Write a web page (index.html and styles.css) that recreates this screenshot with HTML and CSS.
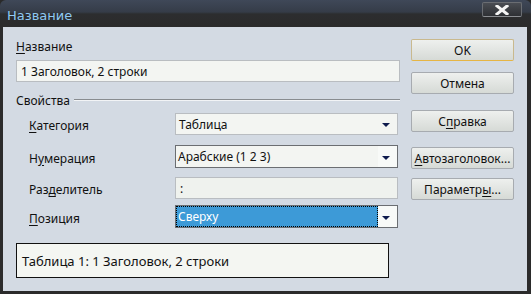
FILE: index.html
```html
<!DOCTYPE html>
<html lang="ru">
<head>
<meta charset="utf-8">
<link rel="stylesheet" href="styles.css">
</head>
<body>
<div class="window">
  <div class="titlebar">
    <span class="title">Название</span>
    <div class="close">
      <svg width="14" height="10" viewBox="0 0 14 10"><path d="M2 1 L12 9 M12 1 L2 9" stroke="#f4f4f4" stroke-width="3" stroke-linecap="square"/></svg>
    </div>
  </div>
  <div class="body">
    <div class="main">
      <div class="lbl"><u>Н</u>азвание</div>
      <div class="input name">1 Заголовок, 2 строки</div>
      <div class="legend"><span>Свойства</span><div class="rule"></div></div>
      <div class="props">
        <div class="prow r1">
          <div class="plabel"><u>К</u>атегория</div>
          <div class="combo"><span class="val">Таблица</span><span class="arrow"></span></div>
        </div>
        <div class="prow r2">
          <div class="plabel">Н<u>у</u>мерация</div>
          <div class="combo dark"><span class="val">Арабские (1 2 3)</span><span class="arrow"></span></div>
        </div>
        <div class="prow r3">
          <div class="plabel">Раз<u>д</u>елитель</div>
          <div class="input sep">:</div>
        </div>
        <div class="prow r4">
          <div class="plabel"><u>П</u>озиция</div>
          <div class="combo dark"><span class="val sel">Сверху</span><span class="arrow"></span></div>
        </div>
      </div>
      <div class="preview">Таблица 1: 1 Заголовок, 2 строки</div>
    </div>
    <div class="buttons">
      <div class="btn default b1">OK</div>
      <div class="btn b2">Отмена</div>
      <div class="btn b3">С<u>п</u>равка</div>
      <div class="btn b4"><u>А</u>втозаголовок...</div>
      <div class="btn b5">Параметр<u>ы</u>...</div>
    </div>
  </div>
</div>
</body>
</html>
```

FILE: styles.css
```css
html, body {
  margin: 0;
  padding: 0;
  background: #2a2a2a;
}
body {
  width: 531px;
  height: 294px;
  overflow: hidden;
  font-family: "Noto Sans", "Open Sans", sans-serif;
  font-size: 12px;
  color: #111;
}
u { text-decoration: underline; text-underline-offset: 2px; }
.window {
  width: 531px;
  height: 294px;
  box-sizing: border-box;
  background: #2b2b2b;
  border-radius: 6px 6px 0 0;
  display: flex;
  flex-direction: column;
  padding: 0 4px 3px 3px;
}
.titlebar {
  height: 27px;
  flex: none;
  display: flex;
  align-items: flex-start;
  justify-content: space-between;
  margin: 0 -4px 0 -3px;
  padding: 0 9px 0 7px;
  background: linear-gradient(#3f4858 0, #353c48 12px, #2c2d2f 14px, #2b2b2b 27px);
  border-radius: 6px 6px 0 0;
}
.title {
  color: #8ec8f2;
  font-family: "DejaVu Sans", sans-serif;
  font-size: 13px;
  line-height: 14px;
  margin-top: 9px;
}
.close {
  width: 40px;
  height: 15px;
  margin-top: 2px;
  box-sizing: border-box;
  border: 1px solid #6a6d72;
  border-bottom-color: #8b8e92;
  background: linear-gradient(#4a4d53, #2e3034);
  border-radius: 2px;
  display: flex;
  align-items: center;
  justify-content: center;
}
.body {
  flex: 1;
  background: #d3dae3;
  display: flex;
  padding-left: 13px;
}
.main {
  width: 384px;
  display: flex;
  flex-direction: column;
}
.lbl {
  margin-top: 12px;
  height: 16px;
  line-height: 16px;
}
.input {
  box-sizing: border-box;
  border: 1px solid #b9bdc1;
  background: #f3f5f2;
  padding-left: 4px;
  display: flex;
  align-items: center;
}
.name {
  margin-top: 5px;
  height: 22px;
}
.legend {
  margin-top: 10px;
  display: flex;
  align-items: center;
  height: 16px;
}
.rule {
  flex: 1;
  margin-left: 4px;
  height: 1px;
  background: #888c90;
  border-bottom: 1px solid #f2f4f6;
  margin-top: -1px;
}
.props {
  margin-top: 5px;
  display: flex;
  flex-direction: column;
}
.prow {
  display: flex;
  align-items: center;
}
.prow > :last-child {
  width: 223px;
  height: 100%;
}
.r1 { height: 22px; }
.r2 { height: 23px; margin-top: 10px; }
.r3 { height: 22px; margin-top: 9px; }
.r4 { height: 23px; margin-top: 6px; }
.plabel {
  width: 146px;
  padding-left: 13px;
  padding-top: 3px;
}
.combo {
  box-sizing: border-box;
  border: 1px solid #b9bdc1;
  background: #f3f5f2;
  display: flex;
  align-items: center;
  position: relative;
}
.combo.dark {
  border-color: #6b6e72;
  background: #f8faf8;
}
.combo .val {
  flex: 1;
  padding-left: 3px;
}
.combo.dark .val {
  background: #f3f5f2;
  height: 100%;
  display: flex;
  align-items: center;
  margin-right: 19px;
  padding-left: 2px;
}
.combo .val.sel {
  background: #3d9ad7;
  color: #fff;
  outline: 1px dotted #000;
  outline-offset: -1px;
}
.arrow {
  position: absolute;
  right: 7px;
  top: 50%;
  margin-top: -1px;
  width: 0;
  height: 0;
  border-left: 4px solid transparent;
  border-right: 4px solid transparent;
  border-top: 4px solid #0e1b4d;
}
.sep {
  background: #eff2ee;
  padding-left: 4px;
}
.preview {
  margin-top: 15px;
  width: 373px;
  height: 35px;
  box-sizing: border-box;
  border: 1px solid #111;
  background: #f4f6f2;
  font-size: 13px;
  display: flex;
  align-items: center;
  padding-left: 5px;
}
.buttons {
  margin-left: 11px;
  width: 103px;
  display: flex;
  flex-direction: column;
}
.btn {
  height: 22px;
  box-sizing: border-box;
  border: 1px solid #a7abb0;
  border-radius: 2px;
  background: linear-gradient(#eef0ee, #e2e5e2 50%, #d6dad6);
  display: flex;
  align-items: center;
  justify-content: center;
  color: #111;
}
.btn.default {
  border-color: #c9b98e;
  border-bottom-color: #e6b545;
}
.b1 { margin-top: 12px; }
.b2 { margin-top: 11px; }
.b3 { margin-top: 16px; }
.b4 { margin-top: 15px; }
.b5 { margin-top: 9px; }
```
